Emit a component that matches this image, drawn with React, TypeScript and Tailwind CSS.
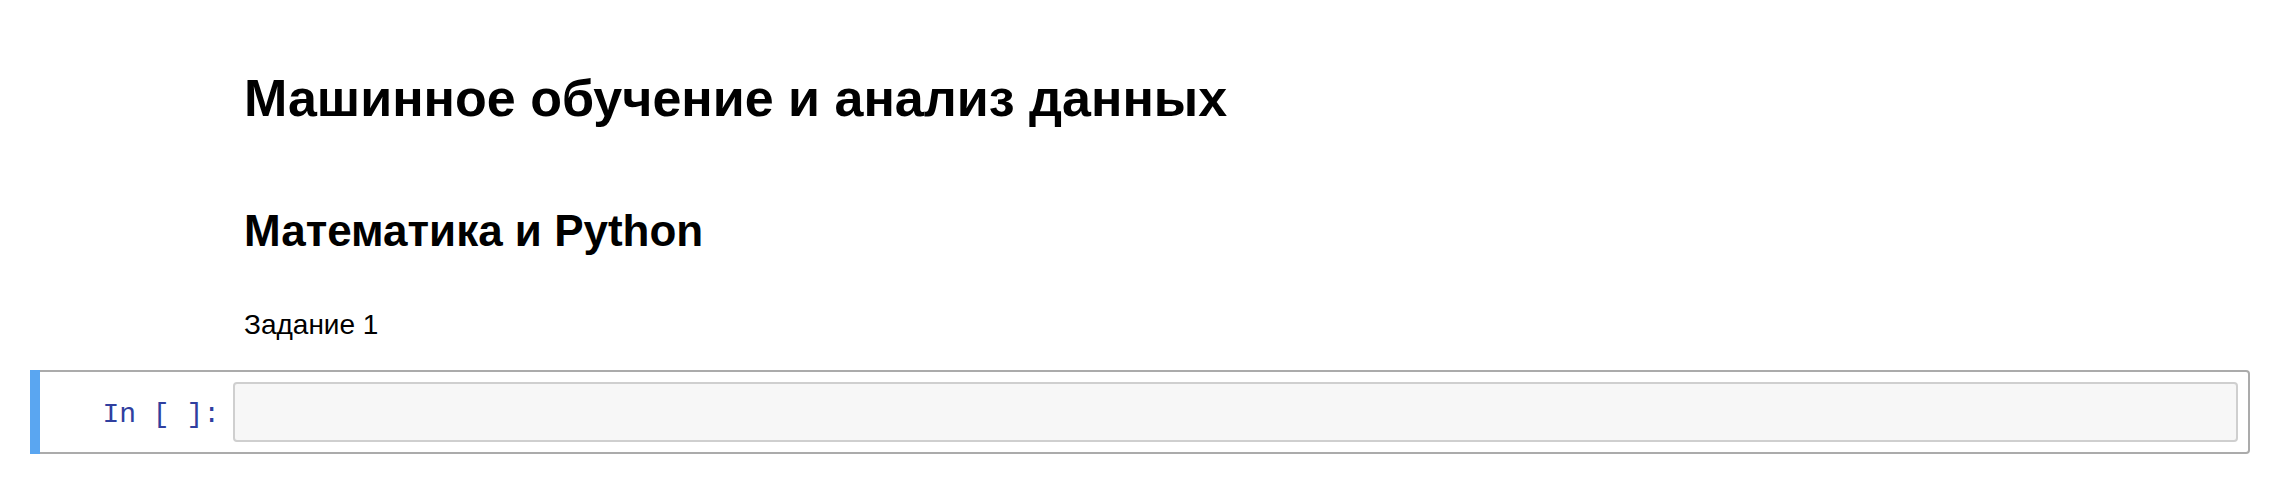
import React from "react";

export default function App() {
  return (
    <div
      className="w-[2276px] h-[478px] bg-white overflow-hidden text-black"
      style={{ fontFamily: '"Liberation Sans", Arial, sans-serif' }}
    >
      <div className="pl-[30px] pr-[26px] flex flex-col">
        <div className="pl-[214px] flex flex-col">
          <h1 className="mt-[72px] text-[52px] leading-[52px] font-bold">
            Машинное обучение и анализ данных
          </h1>
          <h2 className="mt-[85px] text-[44px] leading-[44px] font-bold">
            Математика и Python
          </h2>
          <p className="mt-[58px] text-[28px] leading-[28px]">Задание 1</p>
        </div>
        <div className="mt-[31px] flex">
          <div className="w-[10px] self-stretch bg-[#5aa6f1]" />
          <div className="flex-1 flex items-start border-t-2 border-b-2 border-r-2 border-[#ababab] rounded-r-[4px] py-[10px] pr-[10px]">
            <div
              className="w-[193px] shrink-0 pt-[19px] pr-[13px] text-right text-[28px] leading-[28px] text-[#303f9f] whitespace-pre"
              style={{ fontFamily: '"Liberation Mono", "Courier New", monospace' }}
            >
              {"In [ ]:"}
            </div>
            <div className="flex-1 h-[60px] bg-[#f7f7f7] border-2 border-[#cfcfcf] rounded-[4px]" />
          </div>
        </div>
      </div>
    </div>
  );
}
